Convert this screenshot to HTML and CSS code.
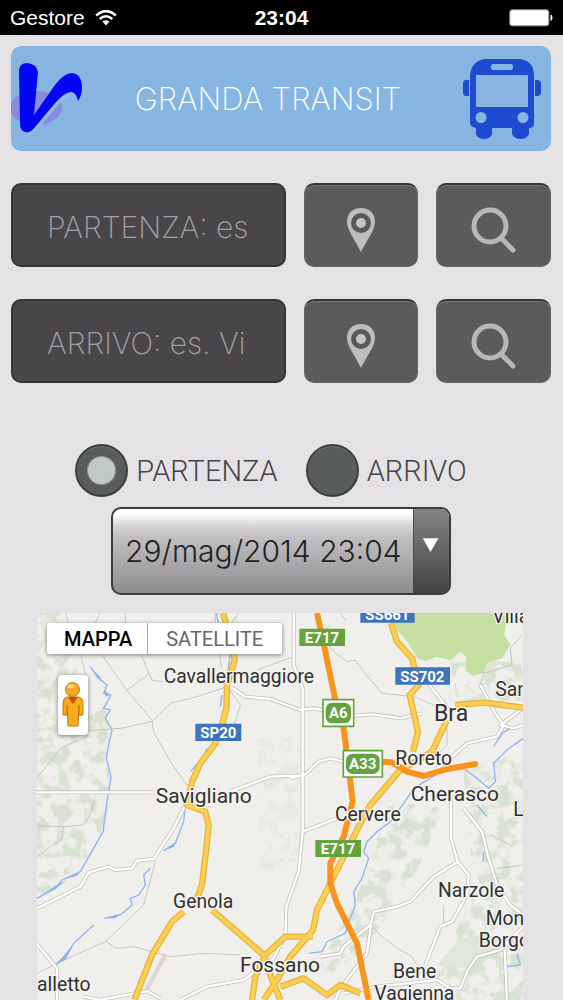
FILE: index.html
```html
<!DOCTYPE html>
<html lang="it">
<head>
<meta charset="utf-8">
<meta name="viewport" content="width=device-width, initial-scale=1">
<title>Granda Transit</title>
<link rel="stylesheet" href="styles.css">
</head>
<body>
<div class="status">
  <div class="status-left">
    <span>Gestore</span>
    <svg class="wifi" viewBox="0 0 22 16" aria-hidden="true"><g fill="none" stroke="#fff" stroke-width="2.6"><path d="M1.2 5.4Q11-3.200 20.800 5.400"/><path d="M4.700 9Q11 3.500 17.300 9"/></g><path d="M7.400 11.500Q11 8.800 14.600 11.500L11 15.600Z" fill="#fff"/></svg>
  </div>
  <span class="clock">23:04</span>
  <svg class="battery" viewBox="0 0 44 18" aria-hidden="true"><rect x=".8" y=".8" width="39" height="16" rx="2.500" fill="#fff" stroke="#999" stroke-width="1"/><path d="M41.500 5.500q2 .5 2 3.300t-2 3.300z" fill="#fff"/></svg>
</div>

<main class="page">
  <header class="banner">
    <svg class="logo" viewBox="0 0 74 76" aria-hidden="true"><ellipse cx="25" cy="47" rx="26" ry="17" fill="#898bdd"/><path d="M18 72Q23 71 29 63L44 45Q53 35 60 34" fill="none" stroke="#93bce9" stroke-width="3"/><path d="M8 9Q9 2 16 2Q26 3 27 11L23 54L44 24Q53 12 61 12Q71 13 71 27Q71 34 67 40Q65 31 60 31Q54 31 44 42L24 66Q19 73 14 71Q9 70 9 62Z" fill="#0505f5"/></svg>
    <h1 class="title">GRANDA TRANSIT</h1>
    <svg class="bus" viewBox="0 0 78 82" aria-hidden="true"><path fill="#1f4bd0" fill-rule="evenodd" d="M22 1H57Q71 3 71 18V66Q71 70 66 70V76Q64 81 58 81Q51 81 49 76V70H29V76Q27 81 21 81Q15 81 13 76V70Q7 69 7 65V18Q8 3 22 1ZM30 6Q28 6 28 9T30 12H48Q50 12 50 9T48 6ZM13 17V49H65V17ZM18 54A5.500 5.500 0 1 0 18 65A5.500 5.500 0 1 0 18 54ZM60 54A5.500 5.500 0 1 0 60 65A5.500 5.500 0 1 0 60 54Z"/><path d="M6 22V38H3Q0 38 0 34V26Q0 22 3 22ZM72 22V38H74Q78 38 78 34V26Q78 22 74 22Z" fill="#1f4bd0"/></svg>
  </header>

  <form class="search">
    <div class="row">
      <input class="field" type="text" aria-label="Partenza" placeholder="PARTENZA: es">
      <button class="tool" type="button" aria-label="Posizione partenza"><svg class="pin" viewBox="0 0 30 46"><path d="M15 1C6 1 1 7 1 15C1 23 8 31 15 45C22 31 29 23 29 15C29 7 24 1 15 1Z" fill="#bcbdbe"/><circle cx="15" cy="16" r="7.500" fill="#c4c5c6" stroke="#57595a" stroke-width="5"/></svg></button>
      <button class="tool" type="button" aria-label="Cerca partenza"><svg class="lens" viewBox="0 0 46 46"><g fill="none" stroke="#b5b7b8" stroke-width="5"><circle cx="19" cy="19" r="16"/><path d="M30 31L42 43" stroke-linecap="round"/></g></svg></button>
    </div>
    <div class="row">
      <input class="field" type="text" aria-label="Arrivo" placeholder="ARRIVO: es. Vi">
      <button class="tool" type="button" aria-label="Posizione arrivo"><svg class="pin" viewBox="0 0 30 46"><path d="M15 1C6 1 1 7 1 15C1 23 8 31 15 45C22 31 29 23 29 15C29 7 24 1 15 1Z" fill="#bcbdbe"/><circle cx="15" cy="16" r="7.500" fill="#c4c5c6" stroke="#57595a" stroke-width="5"/></svg></button>
      <button class="tool" type="button" aria-label="Cerca arrivo"><svg class="lens" viewBox="0 0 46 46"><g fill="none" stroke="#b5b7b8" stroke-width="5"><circle cx="19" cy="19" r="16"/><path d="M30 31L42 43" stroke-linecap="round"/></g></svg></button>
    </div>
    <div class="modes">
      <label class="mode"><input class="radio" type="radio" name="mode" checked><span>PARTENZA</span></label>
      <label class="mode"><input class="radio" type="radio" name="mode"><span>ARRIVO</span></label>
    </div>
    <div class="when">
      <select class="date" aria-label="Data e ora"><option>29/mag/2014 23:04</option></select>
      <svg class="arrow" viewBox="0 0 36 84" aria-hidden="true"><path d="M9 29H25L17 43Z" fill="#fff"/></svg>
    </div>
  </form>

  <section class="map" aria-label="Mappa">
    <svg class="canvas" viewBox="20 24 1458 1161">
      <defs>
        <filter id="rough" x="0" y="0" width="1" height="1" color-interpolation-filters="sRGB"><feTurbulence type="fractalNoise" baseFrequency=".025" numOctaves="3" seed="8"/><feColorMatrix values="0 0 0 0 .83  0 0 0 0 .88  0 0 0 0 .8  6 0 0 0 -2.700"/><feComposite in2="SourceGraphic" operator="in"/></filter>
      </defs>
      <path d="M20 24H1478V1185H20Z" fill="#f0efeb"/>
      <g filter="url(#rough)" opacity=".8">
        <path d="M20 24H110L130 180L230 320L240 600L180 760L20 880Z"/>
        <path d="M1080 590L1240 610L1150 820L1010 1020L900 1110L870 1080L990 850Z"/>
        <path d="M1300 500L1478 440V1185H1240L1220 1100L1330 860Z"/>
        <path d="M1260 170H1478V290H1280Z"/>
        <path d="M680 400H810V800H690Z" opacity=".4"/>
      </g>
      <path d="M1085 24H1430L1422 90L1440 120L1415 160L1370 175L1360 205L1325 212L1305 195L1308 155L1290 140L1260 165L1220 155L1185 168L1160 160L1135 115L1100 75Z" fill="#c5dfa0"/>
      <path d="M1220 1080L1290 1000L1370 990L1400 1030L1300 1090Z" fill="#dfe8d8"/>
      <path d="M400 1045L410 1055L355 1155L345 1150Z" fill="#ddd5d3"/>

      <g fill="none" stroke="#c8c5c0" stroke-width="3">
        <path d="M105 24L150 150L165 200L170 395L90 430L20 520"/>
        <path d="M150 90L215 150L285 250L365 345L370 380L420 470L465 535L480 550"/>
        <path d="M175 377L270 370L365 350L420 295L500 275L590 245L630 300L605 380"/>
        <path d="M285 24V90L320 120L365 225L395 230M290 255L355 207M555 24V80L575 190M600 60L625 24M190 60L210 24M680 195L790 155"/>
        <path d="M900 60L870 90L910 140L950 170L975 165L1000 200L1055 265L1150 275L1210 300M930 24L945 45M1250 350V420L1210 460"/>
        <path d="M20 662L100 665L160 660L185 620L190 585M100 665L95 700L20 755"/>
        <path d="M20 1105L90 1070L225 1010L340 900L375 770M225 1010L260 1030L310 1025L420 1055L520 1045L630 1050"/>
        <path d="M1020 960L1060 1000L1110 1035L1145 1055L1160 1080M1240 900V960M1400 790L1478 780M1380 690L1440 720"/>
        <path d="M1475 90L1440 130L1445 180L1360 205L1350 240L1370 275"/>
      </g>

      <g fill="none" stroke="#8db4ef" stroke-width="4">
        <path d="M180 185L205 220L230 240L220 265L242 270L220 310L240 315L225 340L245 375L235 420L228 460L242 515L230 590L218 680L150 800L95 825L75 850L20 880"/>
        <path d="M465 600L460 650L435 715L400 737M360 790L340 810L345 840L325 870L300 880L305 900L270 930L222 940M190 960L130 1015L110 1050L75 1080"/>
        <path d="M558 24L565 60M600 145L590 220M575 270L570 305M530 430L520 455L480 500"/>
        <path d="M1478 400L1430 435L1390 475L1395 530L1375 550L1340 520L1300 490L1240 495L1150 550L1120 595L1080 650L1040 680L1010 710L1000 740L1015 760L995 820L970 860L975 900L960 940L945 985L890 1010L875 1040L835 1045"/>
        <path d="M1390 425L1415 385L1440 370M1340 600L1370 635M1360 740L1358 770M1460 1045L1470 1080L1430 1085"/>
      </g>
      <path d="M180 185L215 222L200 218ZM222 255L240 270L225 275ZM400 737L435 712L432 725ZM222 940L270 926L255 940ZM95 825L150 800L140 812ZM75 1080L110 1040L130 1015L105 1065ZM20 880L75 842L110 825L80 848Z" fill="#8db4ef"/>

      <g fill="none" stroke-linejoin="round">
        <g stroke="#c4c2be" stroke-width="12">
          <path d="M20 562H370M600 560L720 515L805 512M600 245L645 275L720 282L810 315L850 310L970 332L1030 328L1110 340L1175 325"/>
          <path d="M790 24V180L817 250V680L805 800L768 905L765 990L730 1060L640 1125L530 1145L450 1185"/>
          <path d="M545 600L465 600L430 670L370 762L320 767L305 790L255 795L235 785L175 803L150 845L20 910M20 1018L80 1090V1185M160 1175L210 1185L350 1158L390 1180"/>
          <path d="M780 520L825 508L865 470L900 460L960 475M817 680L920 640"/>
          <path d="M1262 585V700L1282 770L1210 815L1140 890L1100 905L1030 920L1020 960L940 1025L930 1045L870 1055M1282 770L1315 810L1310 870L1265 950L1230 965L1185 1080"/>
          <path d="M1300 610L1355 680L1375 760L1400 840L1440 900L1478 930M1478 965L1410 1035L1340 1055L1315 1090L1290 1150H1260L1220 1125L1040 1145L940 1165M1423 1035L1430 1185M1022 960L1010 1045L930 1150L915 1185"/>
          <path d="M1190 230L1260 320M1350 240L1395 325L1420 360L1400 395L1310 415L1250 470L1220 490M1478 310L1410 360L1450 370L1478 360"/>
        </g>
        <g stroke="#fff" stroke-width="7">
          <path d="M20 562H370M600 560L720 515L805 512M600 245L645 275L720 282L810 315L850 310L970 332L1030 328L1110 340L1175 325"/>
          <path d="M790 24V180L817 250V680L805 800L768 905L765 990L730 1060L640 1125L530 1145L450 1185"/>
          <path d="M545 600L465 600L430 670L370 762L320 767L305 790L255 795L235 785L175 803L150 845L20 910M20 1018L80 1090V1185M160 1175L210 1185L350 1158L390 1180"/>
          <path d="M780 520L825 508L865 470L900 460L960 475M817 680L920 640"/>
          <path d="M1262 585V700L1282 770L1210 815L1140 890L1100 905L1030 920L1020 960L940 1025L930 1045L870 1055M1282 770L1315 810L1310 870L1265 950L1230 965L1185 1080"/>
          <path d="M1300 610L1355 680L1375 760L1400 840L1440 900L1478 930M1478 965L1410 1035L1340 1055L1315 1090L1290 1150H1260L1220 1125L1040 1145L940 1165M1423 1035L1430 1185M1022 960L1010 1045L930 1150L915 1185"/>
          <path d="M1190 230L1260 320M1350 240L1395 325L1420 360L1400 395L1310 415L1250 470L1220 490M1478 310L1410 360L1450 370L1478 360"/>
        </g>
      </g>

      <g fill="none" stroke-linejoin="round">
        <g stroke="#e3b13f" stroke-width="19">
          <path d="M578 24L590 65L607 115L613 165L590 240L588 310L575 360L555 415L510 475L485 530L470 600L525 620L535 660L527 740L515 840L500 880M460 920L425 950L365 1050L312 1185M545 915L620 980L700 1050L720 1110L750 1185"/>
          <path d="M1082 55L1100 110L1145 160L1165 240L1138 270L1163 380L1148 440M1250 345L1205 440L1105 500L1020 600L985 665L940 755L890 855L860 915L848 975L780 1055L740 1125L700 1185M1275 300L1365 293L1478 308"/>
          <path d="M848 995H765L705 1050L675 1115L665 1185M750 1145L780 1135L820 1120L890 1170L930 1140L990 1165"/>
        </g>
        <g stroke="#fbcf50" stroke-width="12">
          <path d="M578 24L590 65L607 115L613 165L590 240L588 310L575 360L555 415L510 475L485 530L470 600L525 620L535 660L527 740L515 840L500 880M460 920L425 950L365 1050L312 1185M545 915L620 980L700 1050L720 1110L750 1185"/>
          <path d="M1082 55L1100 110L1145 160L1165 240L1138 270L1163 380L1148 440M1250 345L1205 440L1105 500L1020 600L985 665L940 755L890 855L860 915L848 975L780 1055L740 1125L700 1185M1275 300L1365 293L1478 308"/>
          <path d="M848 995H765L705 1050L675 1115L665 1185M750 1145L780 1135L820 1120L890 1170L930 1140L990 1165"/>
        </g>
        <g stroke="#f7941d" stroke-width="18">
          <path d="M860 24L885 140L915 285L940 370L960 530L967 590L940 695L900 775V835L920 895L980 1015L1015 1185"/>
          <path d="M1050 470L1085 472L1130 500L1180 513L1250 492L1335 477" stroke-linecap="round"/>
        </g>
      </g>

      <g class="shields">
        <path d="M990 24H1153V53H990ZM1095 187H1259V239H1095ZM495 356H633V408H495Z" fill="#3d74bd"/>
        <path d="M807 71H944V123H807ZM855 705H992V756H855Z" fill="#65a33f"/>
        <path d="M878 284H970V364H878ZM939 437H1056V516H939Z" fill="#fff" stroke="#65a33f" stroke-width="5"/>
        <rect x="886" y="293" width="76" height="62" rx="20" fill="#65a33f"/><rect x="947" y="446" width="101" height="61" rx="20" fill="#65a33f"/>
        <text x="1071" y="46">SS661</text><text x="1176" y="230">SS702</text><text x="564" y="398">SP20</text>
        <text x="875" y="113">E717</text><text x="923" y="747">E717</text><text x="924" y="340">A6</text><text x="997" y="493">A33</text>
      </g>
      <g class="places">
        <text x="400" y="234">Cavallermaggiore</text><text class="town" x="376" y="593">Savigliano</text>
        <text class="city" x="1211" y="348">Bra</text><text x="1095" y="479">Roreto</text><text class="town" x="1141" y="588">Cherasco</text>
        <text x="914" y="649">Cervere</text><text x="428" y="910">Genola</text><text class="town" x="629" y="1101">Fossano</text>
        <text x="1223" y="875">Narzole</text><text x="1366" y="960">Mon</text><text x="1345" y="1026">Borgo</text>
        <text x="1088" y="1120">Bene</text><text x="1032" y="1184">Vagienna</text><text x="20" y="1158">alletto</text>
        <text x="1386" y="55">Villa</text><text x="1395" y="274">San</text><text x="1449" y="632">L</text>
      </g>
    </svg>
    <div class="types">
      <button class="type active" type="button">MAPPA</button>
      <button class="type" type="button">SATELLITE</button>
    </div>
    <button class="pegman" type="button" aria-label="Street View">
      <svg viewBox="0 0 22 46" aria-hidden="true"><g stroke="#c07812" stroke-width="1"><path d="M5 15H17Q21 16 21 21V33H17V23L16 44H6L5 23V33H1V21Q1 16 5 15Z" fill="#f5ad1b"/><circle cx="10.500" cy="7.500" r="7" fill="#f5a81c"/></g><path d="M6 15H16L11 22Z" fill="#cf4a19"/><ellipse cx="9" cy="4.500" rx="3.500" ry="2" fill="#fbd487"/></svg>
    </button>
  </section>
</main>
</body>
</html>
```
FILE: styles.css
```css
* { box-sizing: border-box; }
body { margin: 0; background: #e4e2e5; color: #454346; font-family: Inter, "Liberation Sans", sans-serif; font-weight: 300; }
.status { display: grid; grid-template-columns: 1fr auto 1fr; align-items: center; height: 35px; padding: 0 10px; background: #000; color: #fff; font-family: "Liberation Sans", Arial, sans-serif; font-size: 21px; font-weight: 400; }
.status-left { display: flex; align-items: center; gap: 10px; }
.wifi { width: 22px; height: 16px; }
.clock { font-weight: 700; }
.battery { width: 44px; height: 18px; justify-self: end; }
.page { padding: 11px 12px 0 11px; }
.banner { display: flex; align-items: center; justify-content: space-between; height: 105px; padding-right: 10px; border-radius: 10px; background: #87b5e2; color: #fff; }
.logo { width: 74px; height: 76px; }
.title { flex: 1; margin: 0; padding-right: 12px; text-align: center; font-size: 31px; line-height: 36px; font-weight: 200; }
.bus { width: 78px; height: 82px; }
.search { display: flex; flex-direction: column; margin-top: 32px; }
.row { display: grid; grid-template-columns: 12fr 5fr 5fr; gap: 18px; margin-bottom: 32px; }
.field { width: 100%; min-width: 0; height: 84px; padding: 3px 34px 0; border: 2px solid #363438; border-radius: 10px; background: #484649; color: #ddd; font: 200 30px Inter, "Liberation Sans", sans-serif; }
.field::placeholder { color: #a3a1a4; opacity: 1; }
.tool { display: flex; align-items: center; justify-content: center; height: 84px; padding: 8px 0 0; border: 1px solid #66686a; border-top: 2px solid #363438; border-radius: 10px; background: #595b5c; box-shadow: inset 0 1px #77797a; }
.pin { width: 30px; height: 46px; }
.lens { width: 46px; height: 46px; }
.modes { display: flex; justify-content: center; gap: 28px; margin-top: 29px; padding-right: 20px; }
.mode { display: flex; align-items: center; gap: 8px; font-family: Roboto, sans-serif; font-size: 29px; line-height: 34px; }
.radio { appearance: none; width: 53px; height: 53px; margin: 0; border: 2px solid #3d3d40; border-radius: 50%; background: #595c5d; box-shadow: inset 0 1px #707374; }
.radio:checked { background: radial-gradient(circle, #c1c8c8 13px, #595c5d 15px); }
.when { display: flex; align-self: center; height: 88px; margin: 10px 0 18px; border: 2px solid #3d3b3f; border-radius: 10px; overflow: hidden; background: linear-gradient(#fff 0, #fff 6%, #d5d3d6 20%, #c2c0c2 32%, #8e8c8e 100%); }
.date { appearance: none; width: 300px; padding: 0 0 0 12px; border: 0; background: transparent; color: #222; font: 300 30px Inter, "Liberation Sans", sans-serif; }
.arrow { width: 36px; height: 84px; border-left: 1px solid #4b494c; background: linear-gradient(#858386, #454346); }
.map { position: relative; margin: 0 28px 0 26px; overflow: hidden; }
.canvas { display: block; width: 100%; height: auto; }
.types { position: absolute; top: 10px; left: 10px; display: flex; border-radius: 2px; background: #fff; box-shadow: 0 1px 4px #777; }
.type { height: 31px; padding: 0 19px 0 18px; border: 0; background: transparent; color: #666; font: 400 20px Roboto, sans-serif; }
.type.active { padding: 0 15px 0 17px; border-right: 1px solid #aaa; color: #000; font-weight: 500; }
.pegman { position: absolute; top: 62px; left: 21px; width: 30px; height: 60px; padding: 6px 4px; border: 0; border-radius: 4px; background: #fff; box-shadow: 0 1px 4px #777; }
.pegman svg { display: block; width: 22px; height: 46px; }
.shields { fill: #fff; font: 700 45px Roboto, sans-serif; text-anchor: middle; }
.places { fill: #303030; stroke: #f4f3ef; stroke-width: 8px; paint-order: stroke; stroke-linejoin: round; font: 400 58px Roboto, sans-serif; }
.places .town { font-size: 63px; }
.places .city { font-size: 69px; }
```
